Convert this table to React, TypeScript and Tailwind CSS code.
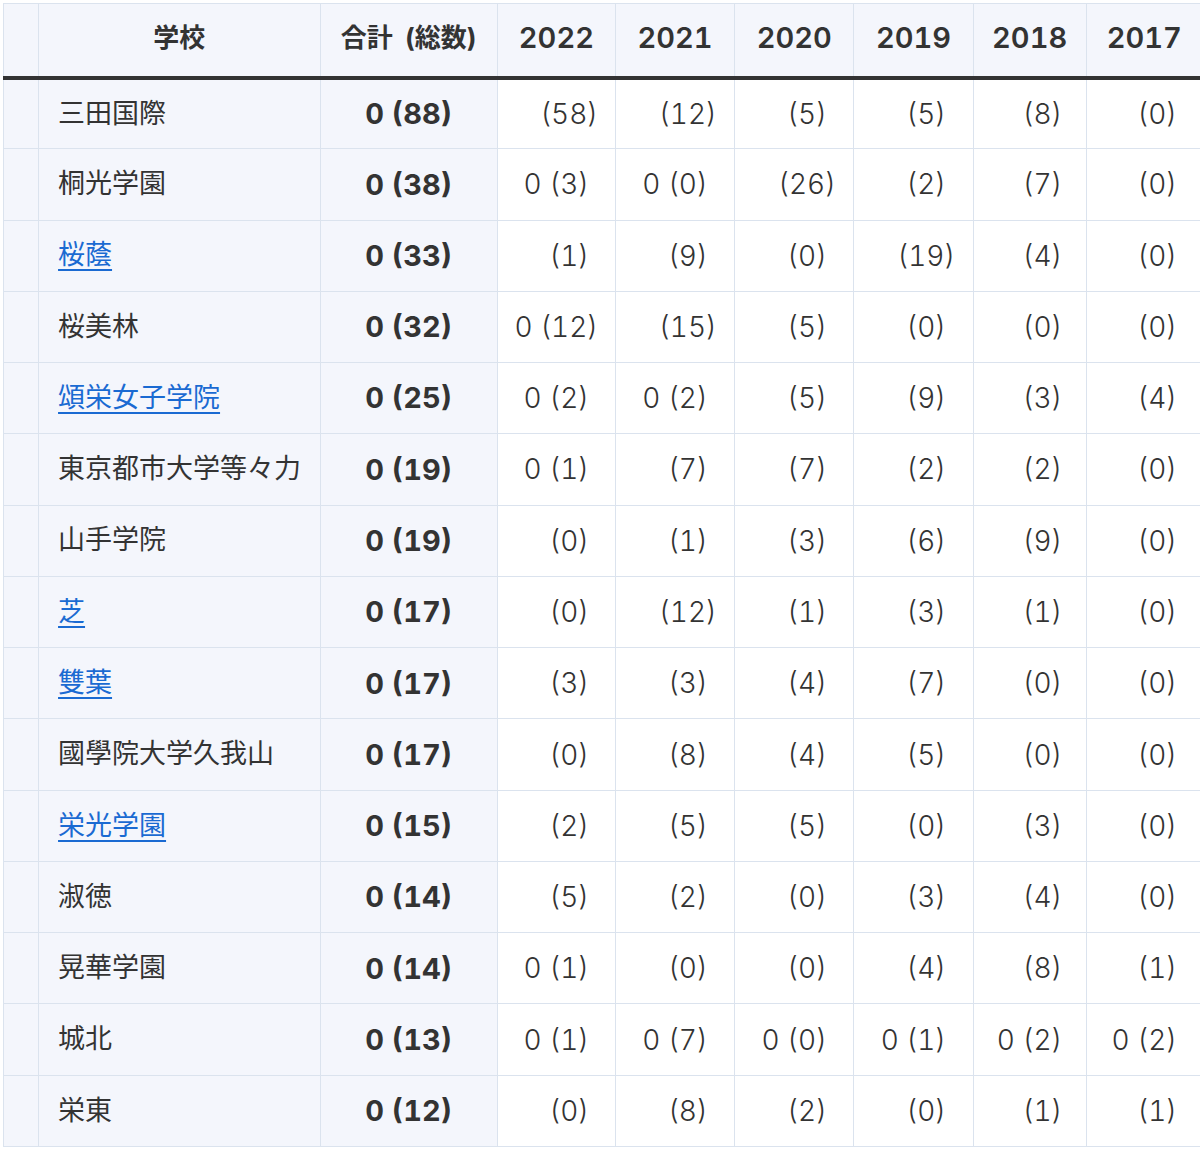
import React from "react";

type Row = { name: string; link?: boolean; total: string; years: [string | null, string][] };

const rows: Row[] = [
  { name: "三田国際", total: "0 (88)", years: [[null, "(58)"], [null, "(12)"], [null, "(5)"], [null, "(5)"], [null, "(8)"], [null, "(0)"]] },
  { name: "桐光学園", total: "0 (38)", years: [["0", "(3)"], ["0", "(0)"], [null, "(26)"], [null, "(2)"], [null, "(7)"], [null, "(0)"]] },
  { name: "桜蔭", link: true, total: "0 (33)", years: [[null, "(1)"], [null, "(9)"], [null, "(0)"], [null, "(19)"], [null, "(4)"], [null, "(0)"]] },
  { name: "桜美林", total: "0 (32)", years: [["0", "(12)"], [null, "(15)"], [null, "(5)"], [null, "(0)"], [null, "(0)"], [null, "(0)"]] },
  { name: "頌栄女子学院", link: true, total: "0 (25)", years: [["0", "(2)"], ["0", "(2)"], [null, "(5)"], [null, "(9)"], [null, "(3)"], [null, "(4)"]] },
  { name: "東京都市大学等々力", total: "0 (19)", years: [["0", "(1)"], [null, "(7)"], [null, "(7)"], [null, "(2)"], [null, "(2)"], [null, "(0)"]] },
  { name: "山手学院", total: "0 (19)", years: [[null, "(0)"], [null, "(1)"], [null, "(3)"], [null, "(6)"], [null, "(9)"], [null, "(0)"]] },
  { name: "芝", link: true, total: "0 (17)", years: [[null, "(0)"], [null, "(12)"], [null, "(1)"], [null, "(3)"], [null, "(1)"], [null, "(0)"]] },
  { name: "雙葉", link: true, total: "0 (17)", years: [[null, "(3)"], [null, "(3)"], [null, "(4)"], [null, "(7)"], [null, "(0)"], [null, "(0)"]] },
  { name: "國學院大学久我山", total: "0 (17)", years: [[null, "(0)"], [null, "(8)"], [null, "(4)"], [null, "(5)"], [null, "(0)"], [null, "(0)"]] },
  { name: "栄光学園", link: true, total: "0 (15)", years: [[null, "(2)"], [null, "(5)"], [null, "(5)"], [null, "(0)"], [null, "(3)"], [null, "(0)"]] },
  { name: "淑徳", total: "0 (14)", years: [[null, "(5)"], [null, "(2)"], [null, "(0)"], [null, "(3)"], [null, "(4)"], [null, "(0)"]] },
  { name: "晃華学園", total: "0 (14)", years: [["0", "(1)"], [null, "(0)"], [null, "(0)"], [null, "(4)"], [null, "(8)"], [null, "(1)"]] },
  { name: "城北", total: "0 (13)", years: [["0", "(1)"], ["0", "(7)"], ["0", "(0)"], ["0", "(1)"], ["0", "(2)"], ["0", "(2)"]] },
  { name: "栄東", total: "0 (12)", years: [[null, "(0)"], [null, "(8)"], [null, "(2)"], [null, "(0)"], [null, "(1)"], [null, "(1)"]] },
];

const years = ["2022", "2021", "2020", "2019", "2018", "2017"];
const yearWidths = ["w-[118px]", "w-[119px]", "w-[119px]", "w-[119px]", "w-[113px]", "w-[116px]"];

export default function App() {
  return (
    <div
      className="bg-white pl-[3px] pt-[3px] text-[#333333]"
      style={{ fontFamily: 'Inter, "Noto Sans CJK JP", "Noto Sans", sans-serif' }}
    >
      <table className="table-fixed border-collapse w-[1200px]">
        <colgroup>
          <col className="w-[35px]" />
          <col className="w-[281px]" />
          <col className="w-[177px]" />
          {yearWidths.map((w, i) => (
            <col key={i} className={w} />
          ))}
        </colgroup>
        <thead>
          <tr className="h-[74px] bg-[#f4f6fc]">
            <th className="border border-[#dbe3ee] border-b-[4px] border-b-[#333333]"></th>
            <th className="border border-[#dbe3ee] border-b-[4px] border-b-[#333333] pb-[4px] text-[26px] font-bold text-center">学校</th>
            <th className="border border-[#dbe3ee] border-b-[4px] border-b-[#333333] pb-[4px] text-[26px] font-bold text-center whitespace-nowrap">
              合計&nbsp;&nbsp;(総数)
            </th>
            {years.map((y) => (
              <th key={y} className="border border-[#dbe3ee] border-b-[4px] border-b-[#333333] pb-[4px] text-[29px] font-semibold tabular-nums text-center">
                {y}
              </th>
            ))}
          </tr>
        </thead>
        <tbody>
          {rows.map((r, i) => (
            <tr key={i} className="h-[71.27px]">
              <td className="border border-[#dbe3ee] bg-[#f4f6fc]"></td>
              <td className="border border-[#dbe3ee] bg-[#f4f6fc] pl-[19px] text-[27px] text-left whitespace-nowrap">
                {r.link ? (
                  <a href="#" className="text-[#1a6ad2] underline underline-offset-[5px] decoration-[1.5px]">
                    {r.name}
                  </a>
                ) : (
                  r.name
                )}
              </td>
              <td className="border border-[#dbe3ee] bg-[#f4f6fc] text-[29px] font-bold tabular-nums text-center whitespace-nowrap">
                {r.total}
              </td>
              {r.years.map(([z, v], j) => (
                <td key={j} className="border border-[#dbe3ee] bg-white text-[28px] font-light tabular-nums text-center whitespace-nowrap">
                  <span className={z ? "" : "invisible"}>0 </span>
                  {v}
                </td>
              ))}
            </tr>
          ))}
        </tbody>
      </table>
    </div>
  );
}
